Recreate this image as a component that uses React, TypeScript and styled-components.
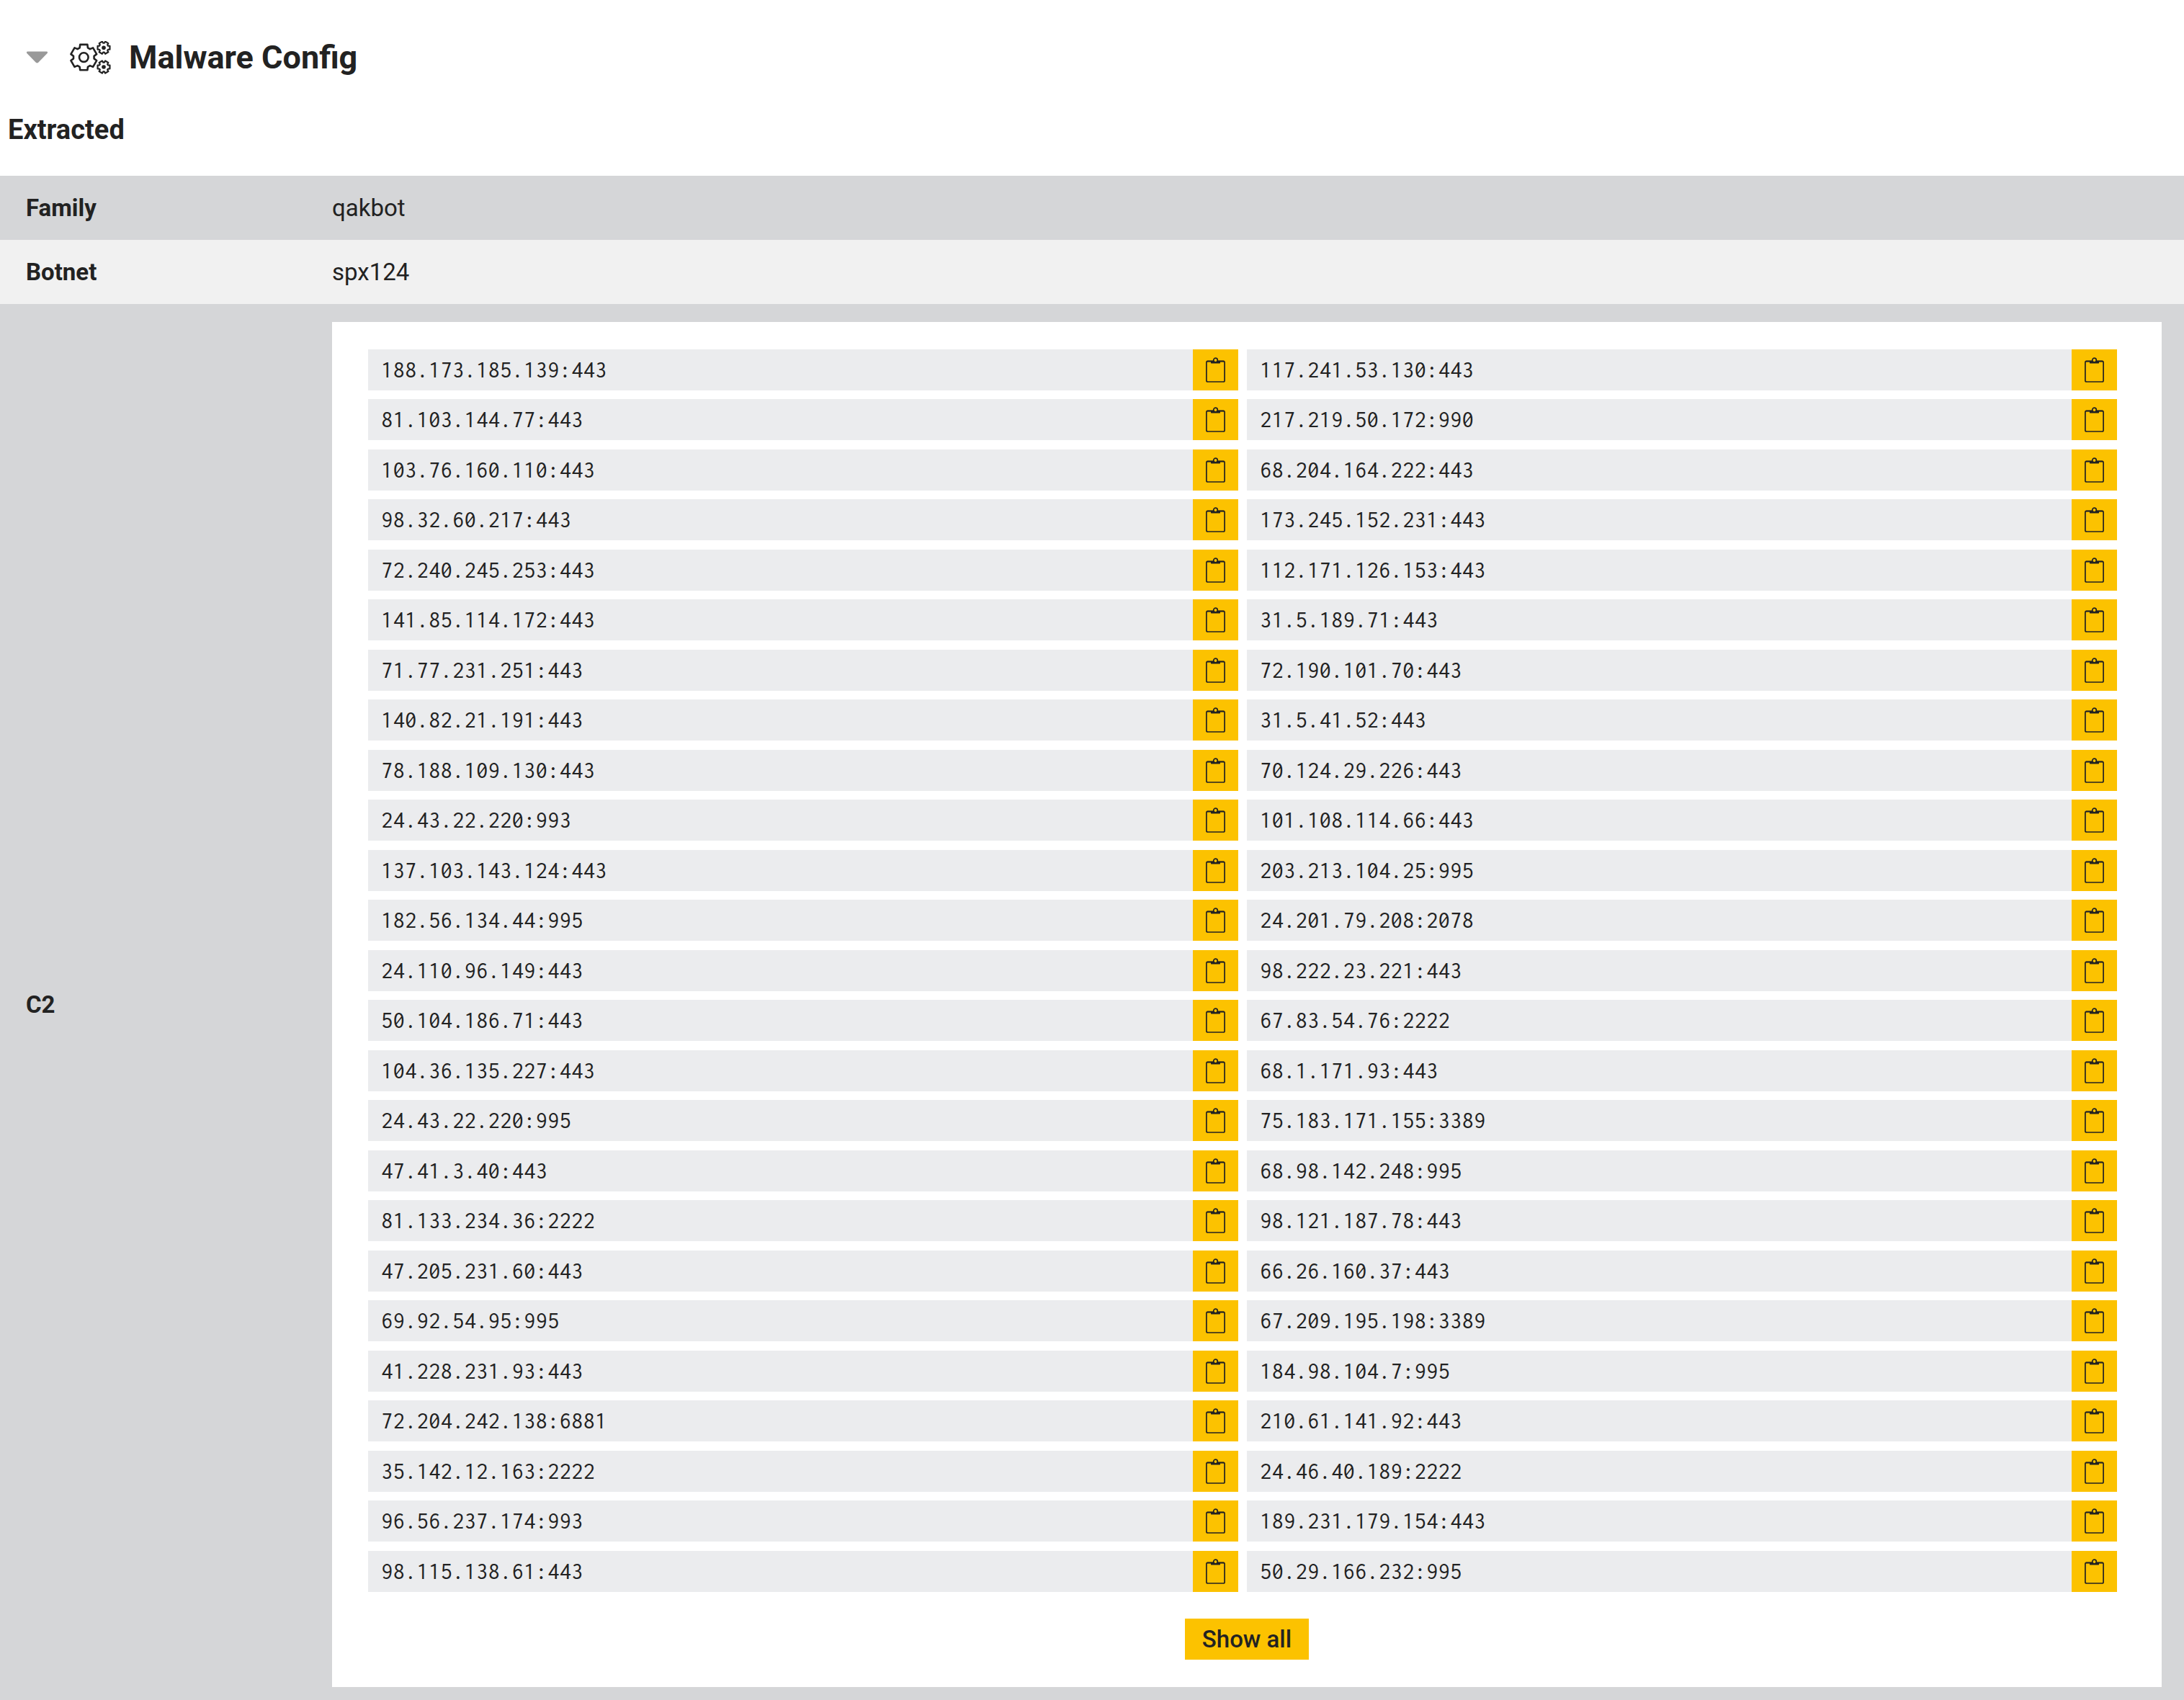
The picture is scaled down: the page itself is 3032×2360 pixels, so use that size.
import React from "react";
import styled, { createGlobalStyle } from "styled-components";

const GlobalStyle = createGlobalStyle`
  *, *::before, *::after { box-sizing: border-box; }
  body {
    margin: 0;
    background: #fff;
    color: #222;
    font-family: Roboto, "Liberation Sans", sans-serif;
    font-size: 33px;
    line-height: 39px;
  }
`;

const Page = styled.main`
  height: 100vh;
  overflow: hidden;
`;

const SectionHeader = styled.header`
  display: flex;
  align-items: center;
  height: 160px;
  padding-left: 36px;
`;

const PlainButton = styled.button`
  display: flex;
  align-items: center;
  justify-content: center;
  padding: 0;
  border: 0;
  background: none;
  color: inherit;
  cursor: pointer;
`;

const HeaderIcon = styled.svg`
  flex: none;
  margin: 0 24px 0 30px;
`;

const SectionTitle = styled.h2`
  margin: 0;
  font-size: 45px;
  line-height: 52px;
  font-weight: 700;
`;

const SubTitle = styled.h3`
  margin: 0;
  padding: 0 11px 44px;
  font-size: 38px;
  line-height: 40px;
  font-weight: 700;
`;

const ConfigTable = styled.table`
  width: 100%;
  border-collapse: collapse;
`;

const ConfigRow = styled.tr`
  background: #f1f1f1;
  &:nth-child(odd) { background: #d5d6d8; }
`;

const Label = styled.th`
  width: 461px;
  padding: 25px 36px;
  text-align: left;
  vertical-align: middle;
  font-weight: 700;
`;

const Value = styled.td`
  padding: 25px 31px 25px 0;
`;

const Panel = styled.div`
  display: flex;
  flex-direction: column;
  align-items: center;
  gap: 25px;
  padding: 38px 50px;
  background: #fff;
`;

const HostGrid = styled.ul`
  display: grid;
  grid-template-columns: 1fr 1fr;
  width: 100%;
  margin: 0;
  padding: 0;
  list-style: none;
`;

const Host = styled.li`
  display: flex;
  height: 57px;
  margin: 0 12px 13px 0;
  background: #ebecee;
  &:nth-child(4n + 1), &:nth-child(4n + 2) { margin-bottom: 12px; }
`;

const Address = styled.code`
  flex: 1;
  padding-left: 18px;
  font-family: Inconsolata, "Noto Sans Mono", "DejaVu Sans Mono", monospace;
  font-size: 33px;
  line-height: 57px;
`;

const CopyButton = styled(PlainButton)`
  width: 63px;
  background: #fcc200;
`;

const ShowAll = styled(PlainButton)`
  height: 57px;
  padding: 0 24px;
  background: #fcc200;
  font: 500 33px/39px Roboto, "Liberation Sans", sans-serif;
`;

const gearPath = (cx: number, cy: number, outer: number, inner: number, offset: number) => {
  const corners: [number, number][] = [[-23, inner], [-16, outer], [16, outer], [23, inner]];
  const points: string[] = [];
  for (let tooth = 0; tooth < 6; tooth++) {
    corners.forEach(([angle, radius]) => {
      const a = ((tooth * 60 + offset + angle) * Math.PI) / 180;
      points.push(`${(cx + radius * Math.sin(a)).toFixed(2)} ${(cy - radius * Math.cos(a)).toFixed(2)}`);
    });
  }
  return `M${points.join("L")}Z`;
};

const GearsIcon = () => (
  <HeaderIcon width="58" height="46" viewBox="0 0 58 46" fill="none" stroke="#222" strokeWidth="2.6" strokeLinejoin="round" aria-hidden="true">
    <path d={gearPath(19.3, 22.6, 18.4, 14.4, 0)} />
    <circle cx="19.3" cy="22.6" r="6.3" />
    <g strokeWidth="2.2">
      <path d={gearPath(47, 9.2, 8.8, 6.5, 30)} />
      <path d={gearPath(47, 36, 8.8, 6.5, 30)} />
    </g>
    <circle cx="47" cy="9.2" r="2.8" fill="#222" stroke="none" />
    <circle cx="47" cy="36" r="2.8" fill="#222" stroke="none" />
  </HeaderIcon>
);

const ClipboardIcon = () => (
  <svg width="27" height="35" viewBox="0 0 27 35" fill="none" stroke="#222" strokeWidth="1.7" aria-hidden="true">
    <rect x="0.9" y="5.4" width="25.2" height="28.6" rx="1.8" />
    <path d="M1.6 5.6H25.4" />
    <path d="M7 5H20V7.4Q20 8.6 18.8 8.6H8.2Q7 8.6 7 7.4Z" fill="#222" stroke="none" />
    <circle cx="13.5" cy="4" r="2.8" fill="#fcc200" />
  </svg>
);

const hosts = [
  "188.173.185.139:443", "117.241.53.130:443",
  "81.103.144.77:443", "217.219.50.172:990",
  "103.76.160.110:443", "68.204.164.222:443",
  "98.32.60.217:443", "173.245.152.231:443",
  "72.240.245.253:443", "112.171.126.153:443",
  "141.85.114.172:443", "31.5.189.71:443",
  "71.77.231.251:443", "72.190.101.70:443",
  "140.82.21.191:443", "31.5.41.52:443",
  "78.188.109.130:443", "70.124.29.226:443",
  "24.43.22.220:993", "101.108.114.66:443",
  "137.103.143.124:443", "203.213.104.25:995",
  "182.56.134.44:995", "24.201.79.208:2078",
  "24.110.96.149:443", "98.222.23.221:443",
  "50.104.186.71:443", "67.83.54.76:2222",
  "104.36.135.227:443", "68.1.171.93:443",
  "24.43.22.220:995", "75.183.171.155:3389",
  "47.41.3.40:443", "68.98.142.248:995",
  "81.133.234.36:2222", "98.121.187.78:443",
  "47.205.231.60:443", "66.26.160.37:443",
  "69.92.54.95:995", "67.209.195.198:3389",
  "41.228.231.93:443", "184.98.104.7:995",
  "72.204.242.138:6881", "210.61.141.92:443",
  "35.142.12.163:2222", "24.46.40.189:2222",
  "96.56.237.174:993", "189.231.179.154:443",
  "98.115.138.61:443", "50.29.166.232:995",
];

export default function App() {
  return (
    <Page>
      <GlobalStyle />
      <SectionHeader>
        <PlainButton type="button" aria-label="Collapse section" aria-expanded="true">
          <svg width="31" height="18" viewBox="0 0 31 18" fill="#999" aria-hidden="true">
            <path d="M2.4 .4H28.6Q31 .8 29.6 3L17.2 15.8Q15.5 17.4 13.8 15.8L1.4 3Q0 .8 2.4 .4Z" />
          </svg>
        </PlainButton>
        <GearsIcon />
        <SectionTitle>Malware Config</SectionTitle>
      </SectionHeader>
      <SubTitle>Extracted</SubTitle>
      <ConfigTable>
        <tbody>
          <ConfigRow>
            <Label scope="row">Family</Label>
            <Value>qakbot</Value>
          </ConfigRow>
          <ConfigRow>
            <Label scope="row">Botnet</Label>
            <Value>spx124</Value>
          </ConfigRow>
          <ConfigRow>
            <Label scope="row">C2</Label>
            <Value>
              <Panel>
                <HostGrid>
                  {hosts.map((host) => (
                    <Host key={host}>
                      <Address>{host}</Address>
                      <CopyButton type="button" aria-label={`Copy ${host}`}>
                        <ClipboardIcon />
                      </CopyButton>
                    </Host>
                  ))}
                </HostGrid>
                <ShowAll type="button">Show all</ShowAll>
              </Panel>
            </Value>
          </ConfigRow>
        </tbody>
      </ConfigTable>
    </Page>
  );
}
